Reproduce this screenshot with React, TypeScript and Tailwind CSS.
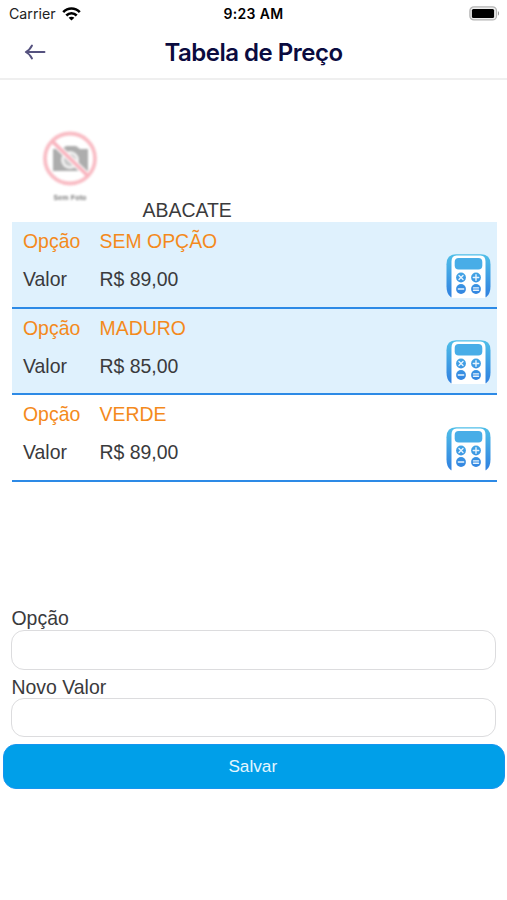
import React from "react";

type Option = { name: string; price: string; tinted: boolean };

const options: Option[] = [
  { name: "SEM OPÇÃO", price: "R$ 89,00", tinted: true },
  { name: "MADURO", price: "R$ 85,00", tinted: true },
  { name: "VERDE", price: "R$ 89,00", tinted: false },
];

function WifiGlyph() {
  return (
    <svg className="h-[14px] w-[19px]" viewBox="0 0 19 14" fill="none" stroke="#000" strokeWidth="2.6">
      <path d="M1.2 5.1C6 .2 13 .2 17.800 5.100" />
      <path d="M4.300 8.500C7.300 5.500 11.700 5.500 14.700 8.500" />
      <path d="M9.500 13.600 6.600 10.800C8.200 9.300 10.800 9.300 12.400 10.800Z" fill="#000" stroke="none" />
    </svg>
  );
}

function BatteryGlyph() {
  return (
    <svg className="h-[15px] w-[31px]" viewBox="0 0 31 15">
      <rect x="0.900" y="0.900" width="26.600" height="13" rx="4" fill="#eee" stroke="#b4b4b4" strokeWidth="1.300" />
      <rect x="2.900" y="2.900" width="22.200" height="9" rx="1.500" fill="#000" />
      <path d="M29 5.200c1.400.5 1.400 3.900 0 4.400z" fill="#999" />
    </svg>
  );
}

function NoPhoto() {
  return (
    <svg className="h-[60px] w-[60px] blur-[0.8px]" viewBox="0 0 60 60">
      <path d="M13 21h9l4-3h10l4 3h8v22H13z" fill="#adadad" />
      <circle cx="30" cy="32" r="9" fill="#f0f0f0" />
      <circle cx="30" cy="32" r="6" fill="#c8c8c8" />
      <path d="M12 13 48 48" stroke="#fff" strokeWidth="6" />
      <circle cx="30" cy="30.500" r="25" fill="none" stroke="#f9bdc5" strokeWidth="3.800" />
      <path d="m12 13 36 35" stroke="#f9b5bf" strokeWidth="3.800" />
    </svg>
  );
}

function Calculator({ id }: { id: string }) {
  return (
    <svg className="h-[44px] w-[45px]" viewBox="0 0 45 44">
      <defs>
        <linearGradient id={id} x1="0" y1="0" x2="0" y2="44" gradientUnits="userSpaceOnUse">
          <stop offset="0" stopColor="#50bfe8" />
          <stop offset="1" stopColor="#2f7fe0" />
        </linearGradient>
      </defs>
      <path d="M10 .3h25q9.500 0 9.500 10v22q0 8-4.500 11H5q-4.500-3-4.500-11v-22Q.5.300 10 .3z" fill={`url(#${id})`} />
      <path d="M10.500 1.600h24q5 0 5 6V44h-34V7.600q0-6 5-6z" fill="#fff" />
      <rect x="8.700" y="4" width="27.600" height="11.500" rx="4" fill="#48ade7" />
      <g fill={`url(#${id})`}>
        <circle cx="15" cy="23.500" r="4.900" />
        <circle cx="30" cy="23.500" r="4.900" />
        <circle cx="15" cy="35" r="4.900" />
        <circle cx="30" cy="35" r="4.900" />
      </g>
      <g stroke="#e8f4fd" strokeWidth="1.400" strokeLinecap="round">
        <path d="m13 21.500 4 4m0-4-4 4M27.300 23.500h5.400M30 20.800v5.400M12.300 35h5.400M27.500 33.900h5M27.500 36.200h5" />
      </g>
    </svg>
  );
}

function OptionRow({ option, id }: { option: Option; id: string }) {
  return (
    <div
      className={`flex h-[86.700px] justify-between border-b-2 border-[#2d8ae6] pr-[6px] pl-[11.500px] ${
        option.tinted ? "bg-[#dff1fd]" : "bg-white"
      }`}
    >
      <div className="grid h-[76px] grid-cols-[76.500px_auto] grid-rows-2 leading-[38px]">
        <span className="text-[#f48a1c]">Opção</span>
        <span className="text-[#f48a1c]">{option.name}</span>
        <span>Valor</span>
        <span>{option.price}</span>
      </div>
      <div className="pt-[31.500px]">
        <Calculator id={id} />
      </div>
    </div>
  );
}

export default function App() {
  return (
    <div className="h-[900px] w-[507px] overflow-hidden bg-white font-['Liberation_Sans',Arial,sans-serif] text-[19.450px] text-[#3a3a3c]">
      <div className="grid h-[27px] grid-cols-3 items-center pr-[7px] pl-[9px] font-[Inter,sans-serif] text-[14px] leading-[27px] text-black">
        <div className="flex items-center gap-[6px]">
          <span className="text-[14.200px] text-[#222]">Carrier</span>
          <WifiGlyph />
        </div>
        <span className="-ml-[2px] text-center text-[14px] font-semibold tracking-[0.350px]">9:23 AM</span>
        <div className="flex justify-end">
          <BatteryGlyph />
        </div>
      </div>
      <header className="grid h-[53px] grid-cols-[80px_1fr_80px] items-center border-b-2 border-[#efefef]">
        <button aria-label="Voltar" className="pb-[2px] pl-[23.500px]">
          <svg className="h-[16px] w-[22px]" viewBox="0 0 22 16" fill="none" stroke="#55527f" strokeWidth="1.900" strokeLinecap="round" strokeLinejoin="round">
            <path d="M20.500 8H2M8 1.500C6.500 4.500 4 7 1.800 8 4 9 6.500 11.500 8 14.500" />
          </svg>
        </button>
        <h1 className="text-center font-[Inter,sans-serif] text-[24px] font-semibold tracking-[-0.500px] text-[#0b0b3f]">Tabela de Preço</h1>
      </header>

      <main>
        <section className="pr-[10px] pl-[11.500px]">
          <div className="flex h-[142px] items-end">
            <div className="flex h-[94px] w-[131px] flex-col items-start pl-[28.500px]">
              <NoPhoto />
              <span className="w-[60px] pt-[5px] text-center text-[7px] leading-[10px] font-bold tracking-[0.150px] text-[#777] blur-[0.8px]">Sem Foto</span>
            </div>
            <span className="leading-[24px]">ABACATE</span>
          </div>
          {options.map((option, i) => (
            <OptionRow key={option.name} option={option} id={`calc-${i}`} />
          ))}
        </section>

        <form className="pt-[124px]">
          <div className="pr-[11px] pl-[10.500px]">
            <label className="block h-[24px] pl-px leading-[24px]" htmlFor="option">Opção</label>
            <input id="option" className="block h-[39.500px] w-full rounded-[13px] border-[1.500px] border-[#dcdcde] bg-white px-3 outline-none" />
            <label className="mt-[5px] block h-[23px] pl-px leading-[24px]" htmlFor="price">Novo Valor</label>
            <input id="price" className="block h-[39px] w-full rounded-[13px] border-[1.500px] border-[#dcdcde] bg-white px-3 outline-none" />
          </div>
          <div className="pt-[7px] pr-[2.500px] pl-[3px]">
            <button type="button" className="block h-[45.500px] w-full rounded-[13px] border border-[#1695f0] bg-[#009fe9] pt-[2px] pr-[2px] text-[17.200px] text-[#e4f6ff]">
              Salvar
            </button>
          </div>
        </form>
      </main>
    </div>
  );
}
